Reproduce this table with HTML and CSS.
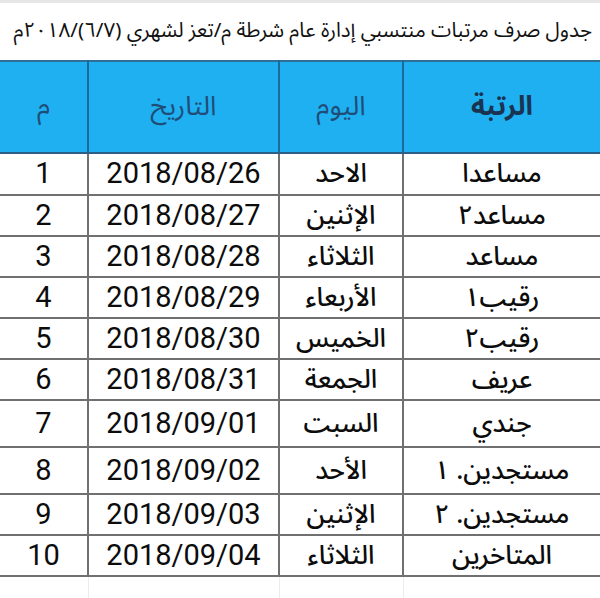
FILE: index.html
```html
<!DOCTYPE html>
<html lang="ar" dir="rtl">
<head>
<meta charset="utf-8">
<link rel="stylesheet" href="styles.css">
</head>
<body>
<div class="page">
  <div class="title">جدول صرف مرتبات منتسبي إدارة عام شرطة م/تعز لشهري (٦/٧)/٢٠١٨م</div>
  <table class="sheet">
    <colgroup>
      <col class="c-rank">
      <col class="c-day">
      <col class="c-date">
      <col class="c-num">
    </colgroup>
    <thead>
      <tr class="head">
        <th class="rank-h">الرتبة</th>
        <th>اليوم</th>
        <th>التاريخ</th>
        <th>م</th>
      </tr>
    </thead>
    <tbody>
      <tr class="first"><td class="ar">مساعدا</td><td class="ar">الاحد</td><td class="num">2018/08/26</td><td class="num">1</td></tr>
      <tr><td class="ar">مساعد٢</td><td class="ar">الإثنين</td><td class="num">2018/08/27</td><td class="num">2</td></tr>
      <tr><td class="ar">مساعد</td><td class="ar">الثلاثاء</td><td class="num">2018/08/28</td><td class="num">3</td></tr>
      <tr><td class="ar">رقيب١</td><td class="ar">الأربعاء</td><td class="num">2018/08/29</td><td class="num">4</td></tr>
      <tr><td class="ar">رقيب٢</td><td class="ar">الخميس</td><td class="num">2018/08/30</td><td class="num">5</td></tr>
      <tr><td class="ar">عريف</td><td class="ar">الجمعة</td><td class="num">2018/08/31</td><td class="num">6</td></tr>
      <tr class="tall"><td class="ar">جندي</td><td class="ar">السبت</td><td class="num">2018/09/01</td><td class="num">7</td></tr>
      <tr class="tall"><td class="ar">مستجدين. ١</td><td class="ar">الأحد</td><td class="num">2018/09/02</td><td class="num">8</td></tr>
      <tr><td class="ar">مستجدين. ٢</td><td class="ar">الإثنين</td><td class="num">2018/09/03</td><td class="num">9</td></tr>
      <tr><td class="ar">المتاخرين</td><td class="ar">الثلاثاء</td><td class="num">2018/09/04</td><td class="num">10</td></tr>
      <tr class="ghost"><td></td><td></td><td></td><td></td></tr>
    </tbody>
  </table>
</div>
</body>
</html>
```
FILE: styles.css
```css
html, body {
  margin: 0;
  padding: 0;
  background: #ffffff;
}

.page {
  width: 600px;
  height: 598px;
  overflow: hidden;
  border-top: 3px solid #e6e6e6;
  box-sizing: border-box;
}

.title {
  height: 57px;
  display: flex;
  align-items: center;
  padding-right: 8px;
  font-family: "Noto Sans Arabic", "DejaVu Sans", sans-serif;
  font-size: 20.5px;
  line-height: 1.2;
  color: #111;
  white-space: nowrap;
}

.sheet {
  width: 602px;
  margin-right: -2px;
  border-collapse: collapse;
  table-layout: fixed;
}

.c-rank { width: 198px; }
.c-day { width: 124px; }
.c-date { width: 191px; }
.c-num { width: 89px; }

.head {
  height: 92px;
  background: #1fb0f2;
}

.head th {
  font-family: "Noto Sans Arabic", "DejaVu Sans", sans-serif;
  font-weight: normal;
  font-size: 27px;
  line-height: 1.2;
  color: #1f4d78;
  border-top: 2px solid #2f6e96;
  border-bottom: 2px solid #2b5f84;
  border-left: 2px solid #1b6a9e;
  border-right: 2px solid #1b6a9e;
  padding: 0;
}

.head th.rank-h {
  font-weight: bold;
  color: #1a3350;
}

.sheet td {
  border: 2px solid #707070;
  padding: 0;
  height: 39px;
  line-height: 1.15;
  text-align: center;
  vertical-align: middle;
  color: #0c0c0c;
  white-space: nowrap;
}

.sheet tr.first td {
  height: 40px;
}

.sheet tr.tall td {
  height: 45px;
}

.sheet td.num {
  font-family: Roboto, "Liberation Sans", sans-serif;
  font-size: 29px;
}

.sheet td.ar {
  font-family: "Noto Sans Arabic", "DejaVu Sans", sans-serif;
  font-size: 26px;
  font-weight: 500;
}

.sheet tr.ghost td {
  height: 30px;
  border-top: 2px solid #707070;
  border-bottom: none;
  border-left: 1px solid #ececec;
  border-right: 1px solid #ececec;
}
```
